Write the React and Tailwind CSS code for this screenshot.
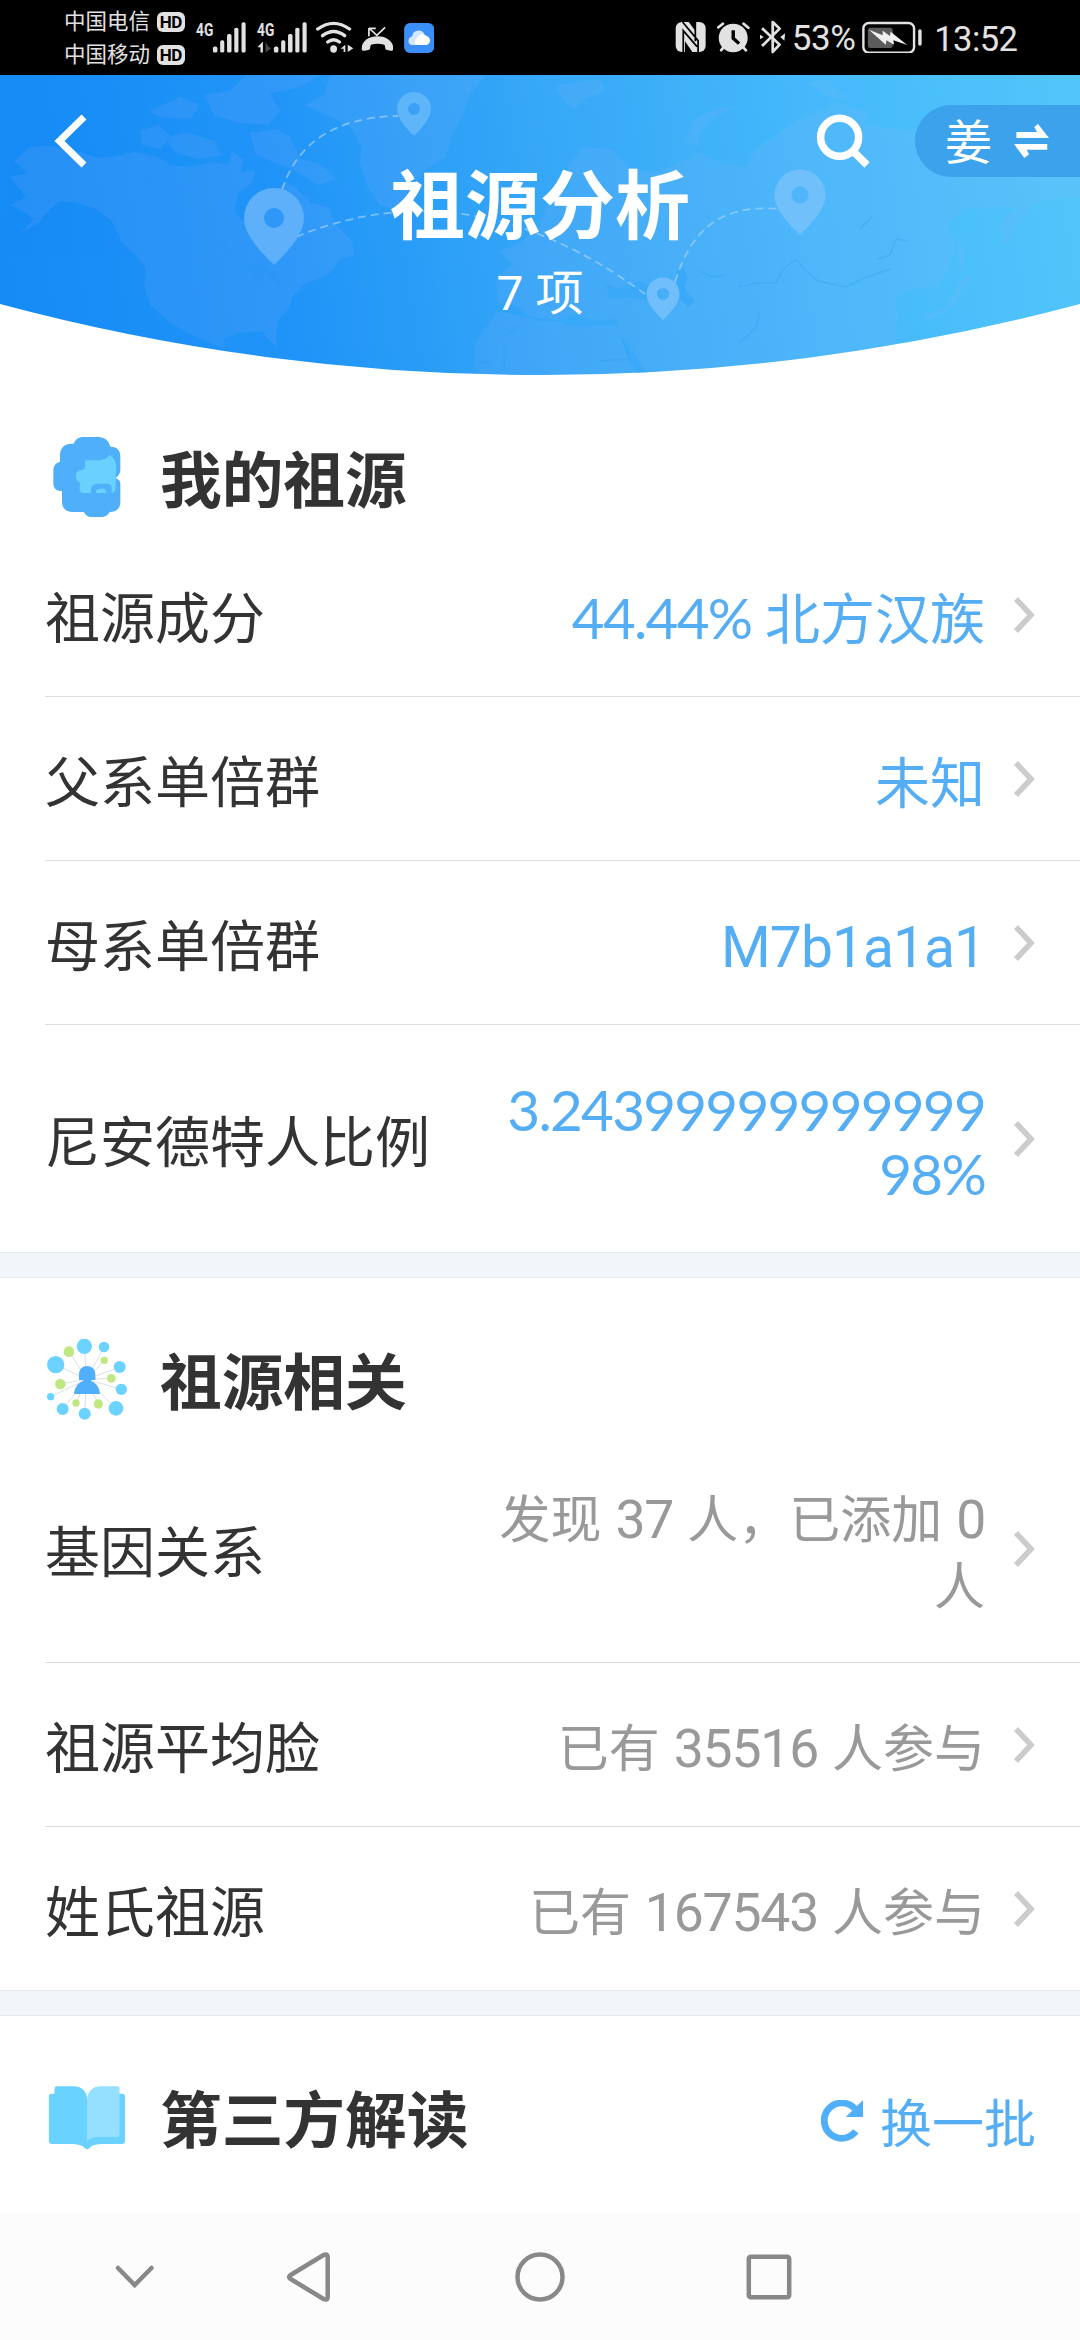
import React from "react";

const CJK = "font-['Roboto','Noto_Sans_CJK_SC',sans-serif]";

function SignalBars({ x, second }) {
  return (
    <svg viewBox="565 50 150 110" preserveAspectRatio="none" className={"-mt-[3.3px] h-[36.6px] w-[51.7px] shrink-0 overflow-visible " + x} fill="#e2e2e2">
      <text x="568" y="106" fontSize="54" fontWeight="700" fontFamily="Roboto" textLength="50" lengthAdjust="spacingAndGlyphs">4G</text>
      <rect x="617" y="139" width="13" height="18" rx="5" />
      <rect x="638" y="120" width="12" height="37" rx="5" />
      <rect x="658" y="101" width="13" height="56" rx="5" />
      <rect x="679" y="82" width="12" height="75" rx="5" />
      <rect x="700" y="66" width="12" height="91" rx="5" />
      {second && (
        <>
          <path d="M585 124V157H578V141H569Z" />
          <path d="M593 124V157L609 144L600 139Z" fill="#4a4a4a" />
        </>
      )}
    </svg>
  );
}

function Carrier({ name }) {
  return (
    <div className="flex h-[33px] items-center">
      <span className="w-[88px] whitespace-nowrap text-[21.500px] leading-[33px] text-[#e2e2e2]">{name}</span>
      <span className="ml-[4.500px] flex h-[20px] w-[28.500px] items-center justify-center rounded-[6px] bg-[#e2e2e2] text-[17px] font-bold leading-[20px] tracking-tight text-black">HD</span>
    </div>
  );
}

function StatusBar() {
  return (
    <div className="flex h-[75px] items-start bg-black">
      <div className="ml-[64px] mt-[5px] w-[121px]">
        <Carrier name="中国电信" />
        <Carrier name="中国移动" />
      </div>
      <div className="mt-[20px] flex h-[33.3px] items-center">
        <SignalBars x="ml-[9.6px]" />
        <SignalBars x="ml-[9.3px]" second />
        <svg viewBox="916 60 112 100" preserveAspectRatio="none" className="ml-[8.2px] h-[33.3px] w-[38.6px]" fill="none" stroke="#e2e2e2" strokeWidth="10" strokeLinecap="round">
          <path d="M924 87Q970 53 1016 87" />
          <path d="M938 107Q970 82 1002 107" />
          <path d="M953 126Q970 113 987 126" />
          <ellipse cx="970" cy="147" rx="10" ry="11" fill="#e2e2e2" stroke="none" />
          <path d="M1004 134V156H999V146H990ZM1011 134V156L1027 145Z" fill="#e2e2e2" stroke="none" />
        </svg>
        <svg viewBox="1047 60 95 100" preserveAspectRatio="none" className="ml-[6.5px] h-[33.3px] w-[32.7px]" fill="none" stroke="#e2e2e2" strokeWidth="5">
          <path d="M1070 109V84M1070 84L1093 106L1117 82M1070 85H1090" />
          <path d="M1049 146C1049 96 1141 96 1141 146C1141 151 1139 153 1133 152L1120 149C1116 147 1118 138 1115 134Q1095 128 1076 134C1073 138 1075 147 1071 149L1058 152C1052 153 1049 151 1049 146Z" fill="#e2e2e2" stroke="none" />
        </svg>
        <svg viewBox="0 0 30 30" className="ml-[10.3px] mt-[2px] h-[30px] w-[30.3px]">
          <rect width="30" height="30" rx="6" fill="#3a8ff8" />
          <path d="M7 22a4.500 4.500 0 0 1 1-8.500a6.500 6.500 0 0 1 12-3l-3 11.500z" fill="#d3e6fc" />
          <path d="M12 22a4 4 0 0 1 .5-6.500a6 6 0 0 1 10-2.500a4.700 4.700 0 0 1 0 9z" fill="#fff" />
        </svg>
      </div>
      <div className="ml-[241.500px] mt-[20px] flex h-[35px] items-start">
        <svg viewBox="392 60 90 100" preserveAspectRatio="none" className="h-[33.3px] w-[31px]">
          <rect x="394" y="66" width="87" height="90" rx="18" fill="#e2e2e2" />
          <path d="M414 66L459 122V156M416 156V92L456 140M451 66V124" fill="none" stroke="#000" strokeWidth="5" />
          <path d="M430 64L452 94V64Z" fill="#000" />
          <path d="M421 158V124L444 158Z" fill="#000" />
        </svg>
        <svg viewBox="510 60 99 100" preserveAspectRatio="none" className="ml-[9.6px] h-[33.3px] w-[34.1px]" fill="none" stroke="#e2e2e2" strokeWidth="8" strokeLinecap="round">
          <ellipse cx="560" cy="114" rx="42" ry="43" fill="#e2e2e2" stroke="none" />
          <path d="M517 82L530 71M590 71L604 83M531 143L525 151M590 143L597 151" />
          <path d="M560 91V115L577 131" stroke="#000" strokeWidth="10" strokeLinecap="butt" />
        </svg>
        <svg viewBox="637 60 73 100" preserveAspectRatio="none" className="ml-[9.7px] h-[33.3px] w-[25.1px] overflow-visible" fill="none" stroke="#e2e2e2" strokeWidth="8">
          <path d="M643 85L694 134L674 156V66L694 86L643 138" strokeLinejoin="round" />
          <path d="M637 104L648 111L637 118ZM710 100L696 111L708 122Z" fill="#e2e2e2" stroke="none" />
        </svg>
        <span className="ml-[7px] mt-[1px] w-[65px] whitespace-nowrap text-[35px] leading-[36px] tracking-[-0.4px] text-[#e2e2e2]">53%</span>
        <svg viewBox="933 60 174 100" preserveAspectRatio="none" className="ml-[5.5px] h-[33.3px] w-[60px]">
          <rect x="937" y="69" width="147" height="89" rx="16" fill="none" stroke="#e2e2e2" strokeWidth="7" />
          <rect x="950" y="83" width="72" height="61" rx="7" fill="#5c5c5c" />
          <path d="M953 89L993 106L993 92L1014 108L1016 95L1064 135L1024 121L1026 134L1004 121L1002 134Z" fill="#f0f0f0" />
          <rect x="1096" y="88" width="10" height="49" rx="5" fill="#e2e2e2" />
        </svg>
        <span className="ml-[12px] mt-[1px] whitespace-nowrap text-[34.500px] leading-[36px] tracking-[-0.6px] text-[#e2e2e2]">13:52</span>
      </div>
    </div>
  );
}

function Pin({ cx, cy, r, tip, hole, color }) {
  const d = `M${cx - r} ${cy}A${r} ${r} 0 0 1 ${cx + r} ${cy}C${cx + r} ${cy + r * 0.6} ${cx + r * 0.35} ${tip - r * 0.35} ${cx} ${tip}C${cx - r * 0.35} ${tip - r * 0.35} ${cx - r} ${cy + r * 0.6} ${cx - r} ${cy}Z M${cx - hole} ${cy}a${hole} ${hole} 0 1 0 ${hole * 2} 0a${hole} ${hole} 0 1 0 ${-hole * 2} 0Z`;
  return <path d={d} fill={color} fillRule="evenodd" />;
}

function HeaderArt() {
  return (
    <svg viewBox="0 0 1080 300" className="absolute inset-0 h-[300px] w-[1080px]">
      <defs>
        <linearGradient id="sky" gradientUnits="userSpaceOnUse" x1="0" y1="150" x2="1060" y2="-20">
          <stop offset="0" stopColor="#158bf5" />
          <stop offset="0.25" stopColor="#2094f8" />
          <stop offset="0.5" stopColor="#36a7f7" />
          <stop offset="0.75" stopColor="#45b8fb" />
          <stop offset="1" stopColor="#51c6fa" />
        </linearGradient>
        <clipPath id="bowl">
          <path d="M0 0H1080V229A2089 2089 0 0 1 0 229Z" />
        </clipPath>
      </defs>
      <g clipPath="url(#bowl)">
        <rect width="1080" height="300" fill="url(#sky)" />
        <g fill="#93b2f6" opacity="0.13">
          <path d="M14 86L30 72L50 71L72 75L98 83L118 81L134 77L158 82L170 90L190 92L212 87L228 90L232 76L244 84L240 98L256 94L252 108L238 118L234 136L244 148L258 150L270 122L286 106L294 112L312 128L328 132L336 150L352 166L354 180L340 184L330 198L306 208L292 222L290 232L278 246L276 262L278 272L270 266L262 256L240 258L224 264L226 274L205 266L188 258L170 248L150 230L144 212L146 194L136 180L122 168L112 146L96 134L78 128L60 126L50 134L38 148L20 158L34 144L26 138L10 130L26 122L10 102L28 98Z" />
          <path d="M140 56L158 50L172 62L160 74L142 70ZM150 36L180 22L200 30L190 44L160 42ZM165 62L190 58L214 66L222 80L200 84L176 78ZM204 20L230 16L246 0H320L300 12L270 18L280 36L268 50L240 48L214 40ZM250 58L276 54L290 62L300 84L322 90L336 104L318 110L296 96L276 88L256 80Z" />
          <path d="M330 0H486L470 20L462 42L452 60L446 82L426 94L408 118L394 134L380 130L368 112L360 88L362 72L350 52L332 42L304 30L324 20Z" />
          <path d="M496 202L512 190L500 176L520 168L540 150L548 126L570 112L568 90L584 72L612 74L628 92L654 98L674 90L700 78L722 88L746 92L756 74L790 50L812 38L838 28L868 38L862 50L900 54L950 56L990 78L1030 84L1080 102V122L1050 124L1030 132L1018 152L1004 172L1000 148L1016 132L990 132L964 134L946 150L956 166L950 190L938 212L914 214L896 222L898 240L896 266L880 290L850 300H580L560 246L530 242L516 230L498 228Z" />
          <path d="M474 290L476 266L498 236L540 246L560 246L580 300H480Z" />
          <path d="M556 10L600 4L606 16L586 24L574 34L562 24ZM684 66L694 44L716 34L738 31L712 44L698 60L700 72ZM806 8L828 4L838 16L850 22L832 24ZM958 210L966 200L974 206L962 216L956 230L940 240L924 246L926 240L946 232ZM958 160L964 176L964 198L959 190Z" />
        </g>
        <g fill="#35a8f8" opacity="0.7">
          <path d="M606 210L616 214L640 206L660 216L652 226L630 222L610 224ZM676 196L684 192L688 204L684 212L694 226L688 232L678 222ZM556 244L576 240L600 246L616 244L618 250L590 252L566 250ZM622 262L630 270L642 292L650 300H638L626 280Z" />
        </g>
        <g fill="none" stroke="#2d9aef" strokeOpacity="0.3" strokeWidth="1.5">
          <path d="M738 212L756 208H776L782 196L796 184L806 196L818 206L846 212L862 204L890 194M878 184L890 180L896 164L908 166M600 286L630 284L622 264M700 196L712 202L724 200M860 154L872 142M520 250L506 260M504 270V298M480 288L490 286M740 268L756 252L760 238" />
        </g>
        <g fill="#2a94f4" opacity="0.45">
          <path d="M145 104L156 98L162 102L152 108ZM168 126L188 120L176 132ZM222 164L230 176L226 177ZM246 190L262 188L278 200L280 212L266 196L258 208Z" />
        </g>
        <g fill="none" stroke="#a9d4fb" strokeOpacity="0.65" strokeWidth="1.8" strokeDasharray="8 5">
          <path d="M282 115Q305 43 398 41" />
          <path d="M296 162Q470 90 645 219" />
          <path d="M675 207C690 160 715 128 781 134" />
        </g>
        <Pin cx={274} cy={143} r={30} tip={190} hole={10} color="#5eb0fa" />
        <Pin cx={414} cy={34} r={17} tip={61} hole={6} color="#5eb5fa" />
        <Pin cx={800} cy={120} r={25.5} tip={160} hole={8.5} color="#70c0fc" />
        <Pin cx={663} cy={219} r={16.5} tip={245} hole={6} color="#70bffc" />
      </g>
    </svg>
  );
}

function Header() {
  return (
    <header className="relative h-[300px] text-white">
      <HeaderArt />
      <div className="relative">
        <div className="flex h-[102px] items-end">
          <svg viewBox="0 0 40 72" className="ml-[52px] h-[72px] w-[40px]" fill="none" stroke="#fff" strokeWidth="7">
            <path d="M32 12L7.500 36L32 60" />
          </svg>
          <svg viewBox="0 0 60 72" className="ml-[718px] h-[72px] w-[60px]" fill="none" stroke="#fff" strokeWidth="7.500">
            <circle cx="29.600" cy="32.300" r="19" />
            <path d="M43 46L57 60" />
          </svg>
          <div className="ml-auto flex h-[72px] w-[165px] items-center rounded-l-full bg-[#3ba2eb] pl-[30px]">
            <span className="w-[48px] pt-[4px] text-[47px] leading-[72px]">姜</span>
            <svg viewBox="1373 147 102 102" preserveAspectRatio="none" className="ml-[20.5px] h-[34px] w-[35px]" fill="#fff">
              <path d="M1380 171H1440L1432 156L1443 147L1475 189H1380ZM1470 207H1373L1403 249L1417 238L1410 224H1470Z" />
            </svg>
          </div>
        </div>
        <h1 className="-mt-[10px] text-center text-[75px] font-bold leading-[80px]">祖源分析</h1>
        <p className="mt-[19px] text-center text-[48px] leading-[56px]">7 项</p>
      </div>
    </header>
  );
}

function AncestorIcon() {
  return (
    <svg viewBox="48 51 243 243" className="h-[81px] w-[81px]">
      <path d="M131 71C136 57 147 51 160 51H205C224 51 236 62 241 80C260 79 271 91 271 108V150C271 160 265 168 257 174C265 177 271 182 271 190V245C271 265 259 276 239 276C233 286 226 291 214 291H187C174 291 167 287 162 276H128C108 276 96 264 96 245V213C80 214 70 205 70 190V152C70 138 77 128 90 125V105C90 84 104 71 124 71Z" fill="#50affa" />
      <path d="M165 121H200C218 121 232 115 239 104C254 114 259 130 259 146L257 172V203C256 214 252 219 245 219V204C245 196 239 191 230 191H204C190 191 183 198 182 219H160C153 219 149 215 149 208V186C142 185 138 179 138 169C138 156 144 150 153 150C161 150 165 146 165 138ZM198 219V215C198 209 202 206 208 206H220C226 206 229 209 229 219Z" fill="#69d0ff" />
    </svg>
  );
}

const BUBBLES = [
  [77, 164, 26, 0], [117, 125, 16, 1], [163, 109, 23, 0], [222, 111, 16, 0], [223, 151, 11, 1], [269, 171, 18, 0], [244, 205, 13, 1],
  [274, 238, 17, 0], [258, 295, 22, 0], [205, 282, 14, 1], [164, 311, 18, 0], [138, 279, 11, 1], [98, 297, 18, 0], [62, 260, 11, 0], [91, 222, 16, 1],
];

function NetworkIcon() {
  return (
    <svg viewBox="48 87 243 243" className="h-[81px] w-[81px]">
      {BUBBLES.map(([x, y], i) => (
        <line key={i} x1="170" y1="208" x2={x} y2={y} stroke="#dcdfe1" strokeWidth="3" />
      ))}
      {BUBBLES.map(([x, y, r, green], i) => (
        <circle key={i} cx={x} cy={y} r={r} fill={green ? "#bfe883" : "#6cd2ff"} />
      ))}
      <path d="M147 210V193C147 177 158 168 171 168S196 177 196 193V210H183V213C199 218 209 235 210 252H132C133 235 143 218 160 213V210Z" fill="#50affa" />
    </svg>
  );
}

function BookIcon() {
  return (
    <svg viewBox="0 0 81 81" className="h-[81px] w-[81px]">
      <path d="M11.500 9.300H28C36 9.300 41.100 15 41.100 22L72 16.700H76C78 16.700 79 17.700 79 19.500V64.500C79 66 78 67 76 67H58C50 67 46 68 43.500 71Q41.100 73.500 38.700 71C36 68 32 67 24 67H6C4 67 2.900 66 2.900 64.500V19.500C2.900 17.700 4 16.700 6 16.700H8.500V12C8.500 10 9.500 9.300 11.500 9.300Z" fill="#6ad2ff" />
      <path d="M41.100 64.700V22C42 14 47 9.300 54.500 9.300H71C73 9.300 73.500 10.200 73.500 11.500V57C73.500 59 72.500 60 71 60H54C47 60 43 62 41.100 64.700Z" fill="#96e0ff" />
    </svg>
  );
}

function SectionHead({ icon, title, size = "h-[157px]", children }) {
  return (
    <div className={"flex items-end pl-[46px] pr-[44px] " + size}>
      <div className="mb-[15px] h-[81px] w-[81px]">{icon}</div>
      <h2 className="mb-[11px] ml-[33px] text-[61.700px] font-bold leading-[80px] text-[#333]">{title}</h2>
      {children}
    </div>
  );
}

/* Splits a value into Latin runs and CJK runs so each gets its own type size. */
function Mixed({ text, latin }) {
  return text.split(/([0-9A-Za-z.%]+)/).map((part, i) =>
    i % 2 ? (
      <span key={i} className={latin}>{part}</span>
    ) : (
      part
    )
  );
}

const LATO = "font-['Lato'] text-[56.500px] leading-none tracking-[-1.700px]";
const BLUE_LATIN = "text-[57px] leading-none tracking-[-1px]";
const GRAY_LATIN = "text-[53.500px] leading-none tracking-[-1.200px]";
const BLUE = "text-[55px] leading-[64px] text-[#55aef4]";
const GRAY = "text-[51px] leading-[67px] [word-spacing:1.3px] text-[#999]";

function Row({ label, lines, tone, latin, size, last }) {
  return (
    <div className={"ml-[45px] flex items-center pr-[45px] " + size + (last ? "" : " border-b border-[#dedede]")}>
      <span className="relative top-[5px] whitespace-nowrap text-[55px] leading-[63px] text-[#333]">{label}</span>
      <span className={"relative top-[5px] ml-auto whitespace-pre text-right " + tone}>
        {lines.map((l) => (
          <span key={l} className="block">
            <Mixed text={l} latin={latin} />
          </span>
        ))}
      </span>
      <svg viewBox="0 0 21 36" className="ml-[29px] h-[36px] w-[21px] shrink-0" fill="none" stroke="#ccc" strokeWidth="5.600">
        <path d="M2 2L17 18L2 34" />
      </svg>
    </div>
  );
}

function Band() {
  return <div className="h-[26px] border-y border-[#e8ebed] bg-[#f2f6fa]" />;
}

function NavBar() {
  return (
    <nav className="flex h-[126px] items-center bg-[#fcfcfc] pl-[105px]">
      <svg viewBox="0 0 60 60" className="h-[60px] w-[60px]" fill="none" stroke="#888" strokeWidth="4.500" strokeLinecap="round">
        <path d="M13 21L29.700 38L46.500 21" />
      </svg>
      <svg viewBox="0 0 60 60" className="ml-[113px] h-[60px] w-[60px]" fill="none" stroke="#888" strokeWidth="4.500" strokeLinejoin="round">
        <path d="M12.200 28.200Q10 30 12.200 31.800L46 52.200Q49.700 53.500 49.700 50V10Q49.700 6.500 46 7.800Z" />
      </svg>
      <svg viewBox="0 0 60 60" className="ml-[172px] h-[60px] w-[60px]" fill="none" stroke="#888" strokeWidth="4.500">
        <circle cx="30" cy="30" r="22.500" />
      </svg>
      <svg viewBox="0 0 60 60" className="ml-[169px] h-[60px] w-[60px]" fill="none" stroke="#888" strokeWidth="4.500">
        <rect x="9.800" y="9.800" width="40.400" height="40.400" rx="2" />
      </svg>
    </nav>
  );
}

export default function App() {
  return (
    <div className={"flex h-[2340px] w-[1080px] flex-col overflow-hidden bg-white " + CJK}>
      <StatusBar />
      <Header />
      <section>
        <SectionHead icon={<AncestorIcon />} title="我的祖源" size="h-[158px]" />
        <Row label="祖源成分" lines={["44.44% 北方汉族"]} tone={BLUE} latin={LATO} size="h-[164px]" />
        <Row label="父系单倍群" lines={["未知"]} tone={BLUE} latin={BLUE_LATIN} size="h-[164px]" />
        <Row label="母系单倍群" lines={["M7b1a1a1"]} tone={BLUE} latin={BLUE_LATIN} size="h-[164px]" />
        <Row label="尼安德特人比例" lines={["3.24399999999999", "98%"]} tone={BLUE} latin={LATO} size="h-[227px]" last />
      </section>
      <Band />
      <section>
        <SectionHead icon={<NetworkIcon />} title="祖源相关" />
        <Row label="基因关系" lines={["发现 37 人，已添加 0", "人"]} tone={GRAY} latin={GRAY_LATIN} size="h-[228px]" />
        <Row label="祖源平均脸" lines={["已有 35516 人参与"]} tone={GRAY} latin={GRAY_LATIN} size="h-[164px]" />
        <Row label="姓氏祖源" lines={["已有 167543 人参与"]} tone={GRAY} latin={GRAY_LATIN} size="h-[163px]" last />
      </section>
      <Band />
      <section className="flex-1">
        <SectionHead icon={<BookIcon />} title="第三方解读">
          <div className="mb-[12px] ml-auto flex items-center text-[#55aef4]">
            <svg viewBox="810 120 122 126" preserveAspectRatio="none" className="h-[42px] w-[42px]" fill="none" stroke="#50affa" strokeWidth="20">
              <path d="M911 214A51 53 0 1 1 908 146" />
              <path d="M932 120V171H882Z" fill="#50affa" stroke="none" />
            </svg>
            <span className="relative top-[5px] ml-[17px] text-[52px] leading-[80px]">换一批</span>
          </div>
        </SectionHead>
      </section>
      <NavBar />
    </div>
  );
}
